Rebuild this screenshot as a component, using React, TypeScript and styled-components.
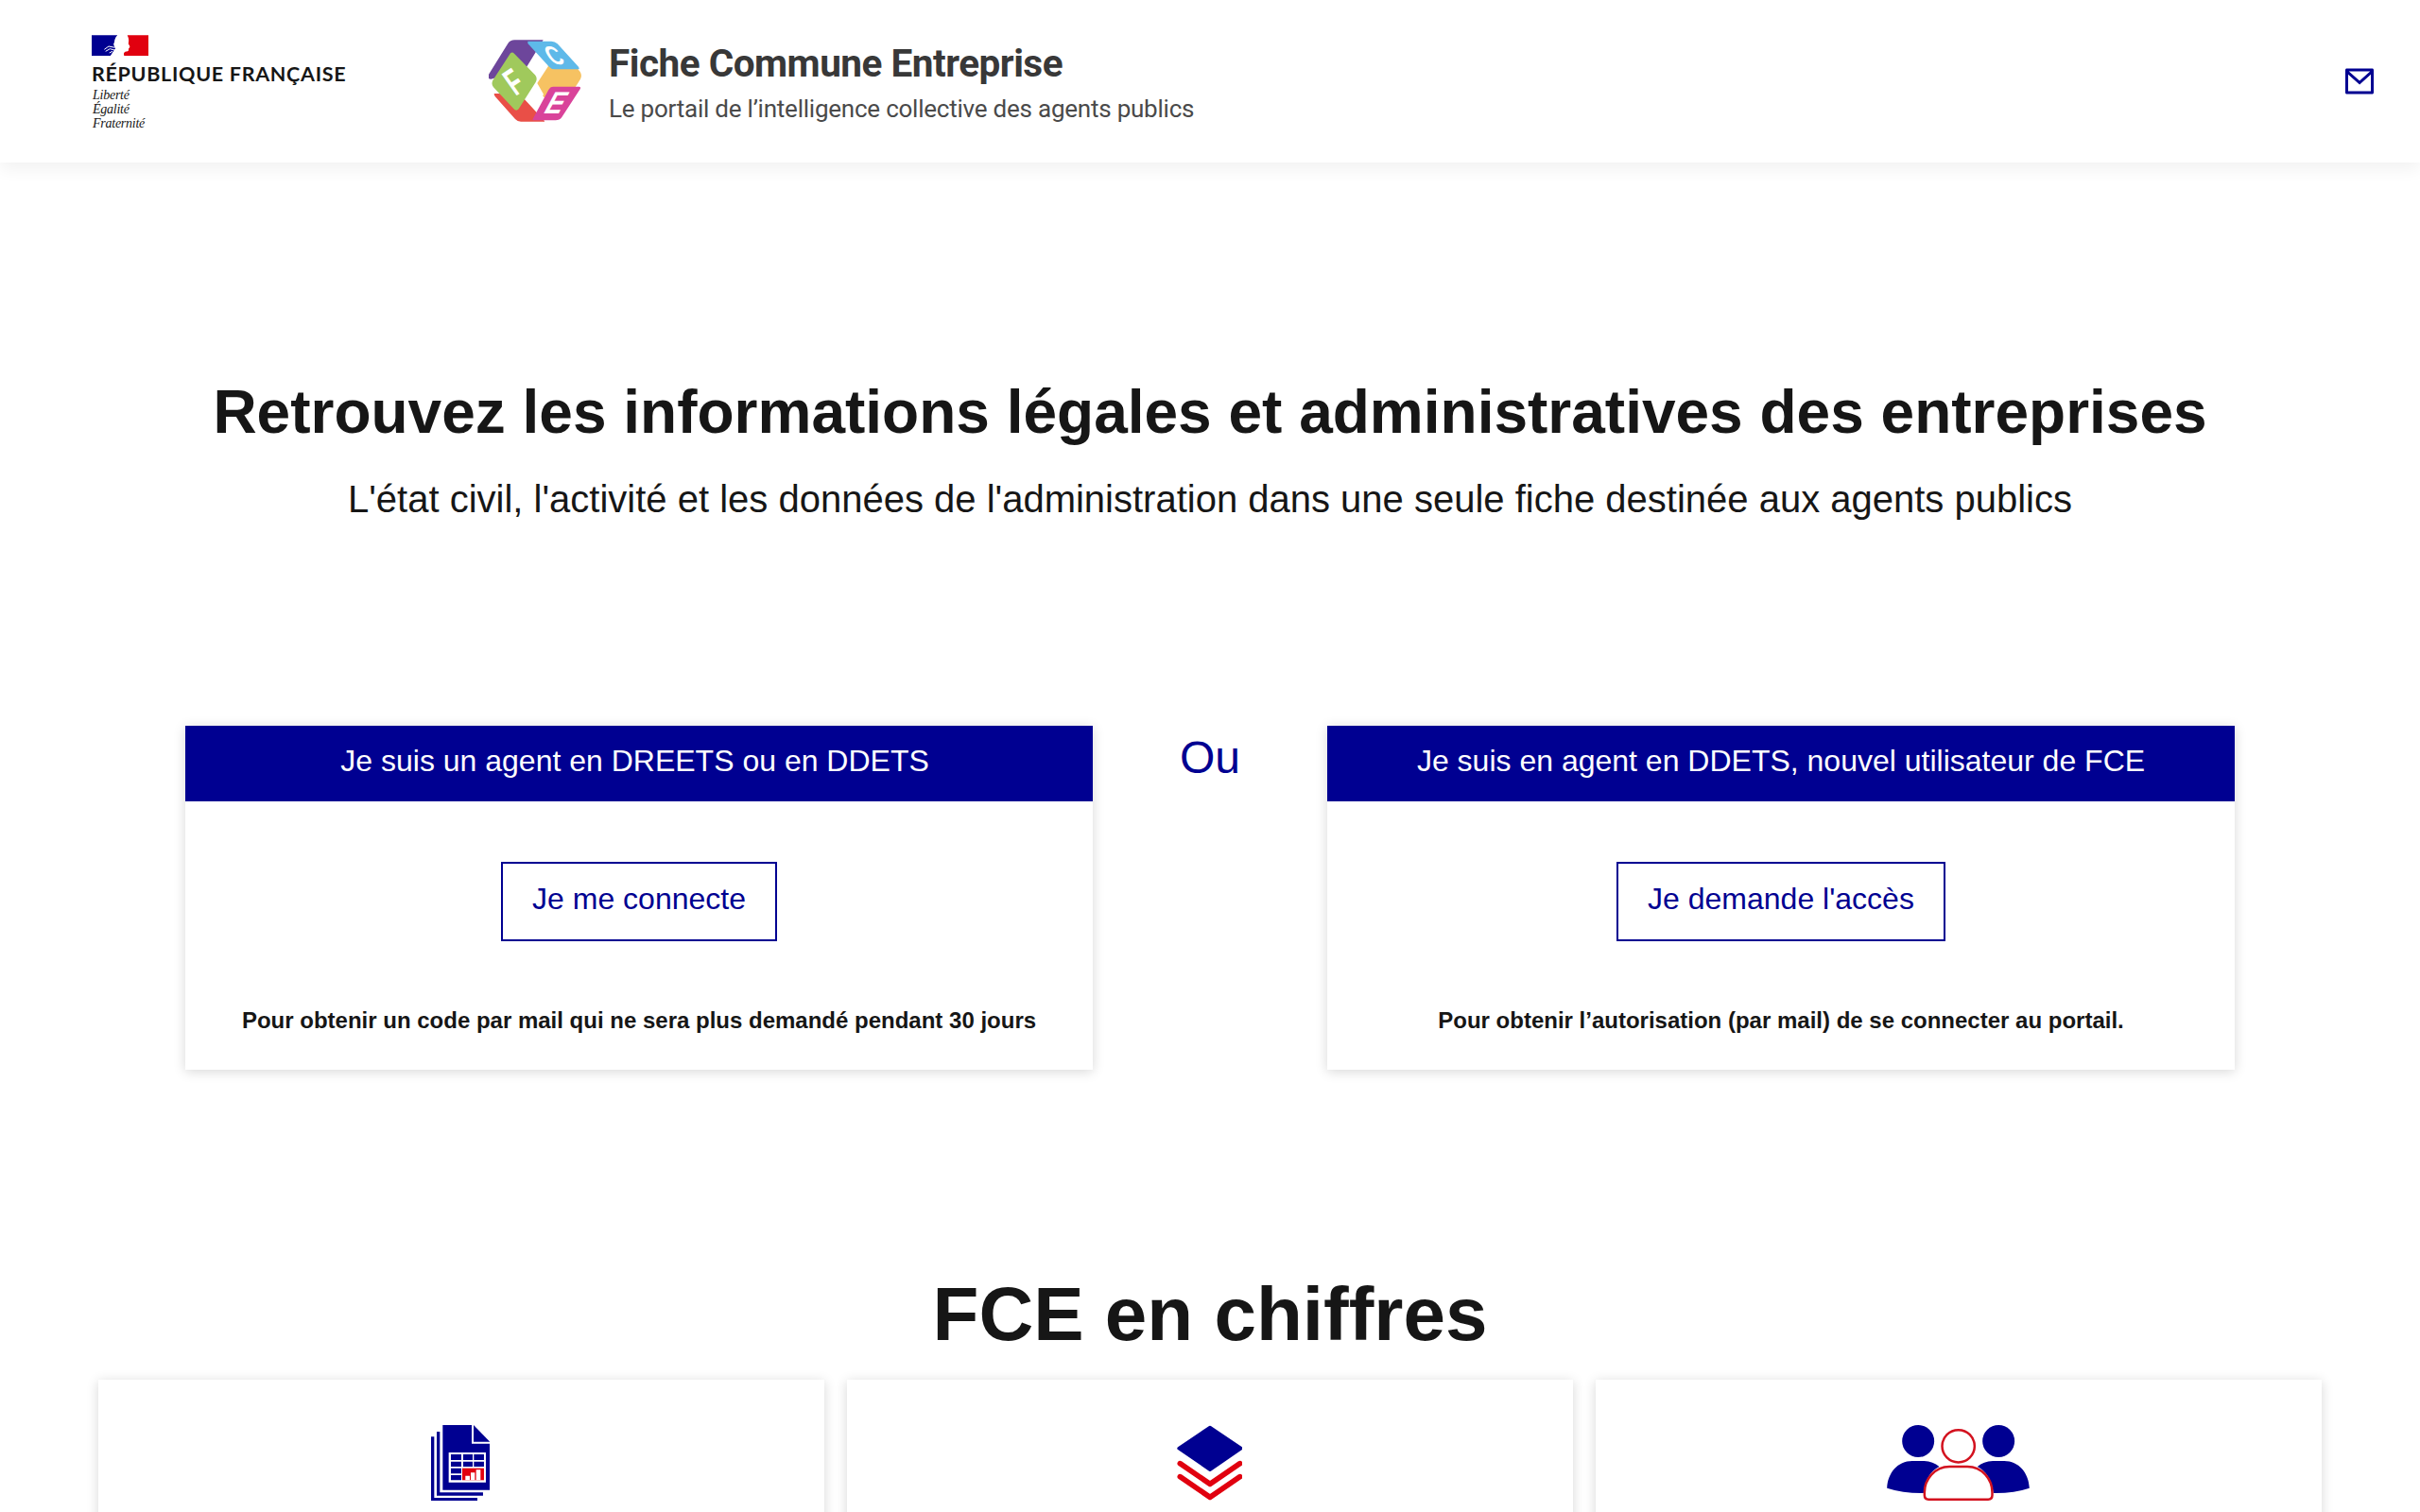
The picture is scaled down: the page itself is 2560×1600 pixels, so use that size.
import React from "react";
import styled, { createGlobalStyle } from "styled-components";
import { RiMailLine } from "react-icons/ri";

const BLUE = "#000091";
const RED = "#e1000f";

const GlobalStyle = createGlobalStyle`
  *, *::before, *::after { box-sizing: border-box; }
  html, body { margin: 0; padding: 0; height: 1600px; overflow: hidden; }
  body {
    background: #fff;
    color: #161616;
    font-family: "Liberation Sans", Arial, sans-serif;
  }
  h1, h2, p { margin: 0; }
`;

const Page = styled.div`
  display: flex;
  flex-direction: column;
  height: 1600px;
  overflow: hidden;
`;

const Header = styled.header`
  display: flex;
  flex: none;
  height: 172px;
  padding: 0 46px 0 97px;
  box-shadow: 0 8px 16px rgba(0, 0, 0, 0.05);
`;

const StateLogo = styled.div`
  width: 420px;
  padding-top: 35px;
  svg { display: block; }
`;

const StateName = styled.div`
  margin-top: 5px;
  font: 700 21.5px/28px Lato, sans-serif;
  letter-spacing: 0.7px;
  white-space: nowrap;
`;

const Motto = styled.div`
  margin: 1px 0 0 1px;
  font: italic 14px/15px "Liberation Serif", serif;
  letter-spacing: -0.25px;
`;

const BrandLogo = styled.svg`
  flex: none;
  margin: 42px 29px 0 0;
`;

const Brand = styled.div`
  flex: 1;
  padding-top: 43px;
  font-family: Roboto, sans-serif;
`;

const BrandTitle = styled.p`
  font-size: 40.5px;
  line-height: 48px;
  font-weight: 700;
  letter-spacing: -0.5px;
  color: #383838;
`;

const BrandTagline = styled.p`
  margin-top: 7px;
  font-size: 26px;
  line-height: 34px;
  letter-spacing: -0.23px;
  color: #4a4a4a;
`;

const MailLink = styled.a`
  align-self: center;
  display: flex;
  color: ${BLUE};
`;

const Hero = styled.section`
  padding-top: 220px;
  text-align: center;
`;

const HeroTitle = styled.h1`
  font-size: 64px;
  line-height: 88px;
`;

const HeroText = styled.p`
  margin-top: 20px;
  font-size: 40px;
  line-height: 56px;
`;

const AccessRow = styled.section`
  display: grid;
  grid-template-columns: 960px 248px 960px;
  margin: 212px 196px 0;
`;

const Card = styled.article`
  background: #fff;
  box-shadow: 0 2px 12px rgba(0, 0, 0, 0.16);
`;

const AccessCard = styled(Card)`
  display: flex;
  flex-direction: column;
  align-items: center;
  height: 364px;
`;

const AccessHeader = styled.div`
  align-self: stretch;
  height: 80px;
  background: ${BLUE};
  color: #fff;
  font-size: 32px;
  line-height: 74px;
  text-align: center;
`;

const AccessButton = styled.button`
  height: 84px;
  margin-top: 64px;
  padding: 0 31px 6px;
  border: 2px solid ${BLUE};
  background: transparent;
  color: ${BLUE};
  font: 32px "Liberation Sans", Arial, sans-serif;
`;

const AccessNote = styled.p`
  margin-top: 68px;
  font-size: 24px;
  line-height: 32px;
  font-weight: 700;
`;

const Or = styled.div`
  color: ${BLUE};
  font-size: 48px;
  line-height: 68px;
  text-align: center;
`;

const StatsTitle = styled.h2`
  margin-top: 205px;
  font-size: 80px;
  line-height: 108px;
  text-align: center;
`;

const StatsRow = styled.section`
  display: grid;
  grid-template-columns: repeat(3, 768px);
  gap: 24px;
  margin: 15px 104px 0;
`;

const StatCard = styled(Card)`
  display: flex;
  justify-content: center;
  align-items: flex-start;
  height: 320px;
  padding: 48px 2px 0 0;
`;

const Letter = styled.text`
  fill: #fff;
  font-family: "Liberation Sans", Arial, sans-serif;
  font-weight: 700;
`;

function FceLogo() {
  return (
    <BrandLogo width="98" height="87" viewBox="51 67 294 261">
      <path d="M51 188V177L112 79Q119 68 133 68H224L166 162L66 190Q56 194 51 190Z" fill="#6d469b" />
      <path d="M68 238H80L150 240L228 325V327H153Q142 327 135 319L71 247Q68 243 68 238Z" fill="#e94f47" />
      <path d="M203 192L228 156Q233 149 240 149H325L341 169Q348 180 342 192L323 222L226 250L205 216Q199 205 203 192Z" fill="#f6c262" />
      <path d="M202 108L240 151L205 205L225 240L200 286L165 245L190 205L172 165Z" fill="#fff" />
      <path d="M120 110Q126 105 132 111L198 179Q207 190 200 202L146 287Q138 296 130 286L66 218Q58 208 64 196Z" fill="#a0c95c" />
      <path d="M175 72H250Q261 72 269 80L336 153Q341 161 333 161H260Q250 161 243 153L175 79Z" fill="#5eb9e9" />
      <path d="M256 216H337Q345 216 341 224L283 313Q276 323 263 323H193Q188 323 192 317L241 226Q246 216 256 216Z" fill="#d9439a" />
      <Letter fontSize="116" textAnchor="middle" transform="matrix(.52 -.34 .6 .85 154 235)">F</Letter>
      <Letter fontSize="82" textAnchor="middle" transform="matrix(.78 0 .6 1 275 145)">C</Letter>
      <Letter fontSize="88" textAnchor="middle" transform="matrix(.95 0 -.6 1.12 248 302)">E</Letter>
    </BrandLogo>
  );
}

function Flag() {
  return (
    <svg width="60" height="24" viewBox="0 0 180 72">
      <path d="M0 7H82Q72 18 72 30Q68 38 76 48L60 72H0Z" fill={BLUE} />
      <path d="M113 7H180V72H103Q99 62 108 58Q118 60 117 50L121 43L116 34Q120 20 113 7Z" fill={RED} />
      <path d="M82 7Q96 -2 112 8Q119 20 115 33L121 43L116 50Q117 59 108 58Q98 62 102 72H60L76 48Q66 38 73 28Q72 16 82 7Z" fill="#fff" />
      <path d="M40 52L54 42L74 46M44 58L58 50L72 54M56 63L66 58" fill="none" stroke="#fff" strokeWidth="3" />
    </svg>
  );
}

function DocumentsIcon() {
  return (
    <svg width="62.3" height="80" viewBox="78 84 187 240">
      <g fill={BLUE}>
        <path d="M78 121H88V315H225V324H78Z" />
        <path d="M96 105H106V298H243V308H96Z" />
        <path d="M115 84H207V143H265V290H115Z" />
        <path d="M213 84L265 137H213Z" />
      </g>
      <path d="M134 171H252V266H134Z" fill="#fff" />
      <path
        d="M141 177H174V195H141ZM180 177H210V195H180ZM214 177H246V195H214ZM141 200H174V216H141ZM180 200H210V216H180ZM214 200H246V216H214ZM141 221H174V238H141ZM141 243H174V259H141Z"
        fill={BLUE}
      />
      <path d="M177 221H246V259H177Z" fill={RED} />
      <path d="M187 245H201V259H187ZM204 235H217V259H204ZM221 226H235V259H221Z" fill="#fff" />
    </svg>
  );
}

function LayersIcon() {
  return (
    <svg width="70" height="80" viewBox="73 84 210 240">
      <path d="M181 91L280 158L181 226L82 158Z" fill={BLUE} stroke={BLUE} strokeWidth="10" strokeLinejoin="round" />
      <g fill="none" stroke={RED} strokeWidth="17" strokeLinecap="round" strokeLinejoin="round">
        <path d="M86 206L181 271L276 206" />
        <path d="M86 248L181 313L276 248" />
      </g>
    </svg>
  );
}

function PeopleIcon() {
  return (
    <svg width="151" height="80" viewBox="47.5 54 453 240">
      <g fill={BLUE}>
        <circle cx="147" cy="105" r="51" />
        <circle cx="402" cy="105" r="51" />
        <path d="M48 254C50 206 82 168 128 168H166Q194 169 214 186Q172 206 164 270Q100 271 48 254Z" />
        <path d="M500 254C498 206 466 168 420 168H384Q354 169 335 186Q376 206 386 270Q450 271 500 254Z" />
      </g>
      <g fill="#fff" stroke="#d3121f" strokeWidth="7.500">
        <circle cx="274.500" cy="121" r="51.500" />
        <path d="M246 186H303C350 186 382 226 382 268V277Q382 290 369 290H180Q167 290 167 277V268C167 226 200 186 246 186Z" />
      </g>
    </svg>
  );
}

const accesses = [
  {
    title: "Je suis un agent en DREETS ou en DDETS\u00a0",
    action: "Je me connecte",
    note: "Pour obtenir un code par mail qui ne sera plus demandé pendant 30 jours",
  },
  {
    title: "Je suis en agent en DDETS, nouvel utilisateur de FCE",
    action: "Je demande l'accès",
    note: "Pour obtenir l’autorisation (par mail) de se connecter au portail.",
  },
];

function Access({ title, action, note }: { title: string; action: string; note: string }) {
  return (
    <AccessCard>
      <AccessHeader>{title}</AccessHeader>
      <AccessButton>{action}</AccessButton>
      <AccessNote>{note}</AccessNote>
    </AccessCard>
  );
}

export default function App() {
  return (
    <Page>
      <GlobalStyle />
      <Header>
        <StateLogo>
          <Flag />
          <StateName>RÉPUBLIQUE FRANÇAISE</StateName>
          <Motto>
            Liberté
            <br />
            Égalité
            <br />
            Fraternité
          </Motto>
        </StateLogo>
        <FceLogo />
        <Brand>
          <BrandTitle>Fiche Commune Entreprise</BrandTitle>
          <BrandTagline>Le portail de l’intelligence collective des agents publics</BrandTagline>
        </Brand>
        <MailLink>
          <RiMailLine size={36} />
        </MailLink>
      </Header>
      <Hero>
        <HeroTitle>Retrouvez les informations légales et administratives des entreprises</HeroTitle>
        <HeroText>
          L'état civil, l'activité et les données de l'administration dans une seule fiche destinée aux agents publics
        </HeroText>
      </Hero>
      <AccessRow>
        <Access {...accesses[0]} />
        <Or>Ou</Or>
        <Access {...accesses[1]} />
      </AccessRow>
      <StatsTitle>FCE en chiffres</StatsTitle>
      <StatsRow>
        <StatCard>
          <DocumentsIcon />
        </StatCard>
        <StatCard>
          <LayersIcon />
        </StatCard>
        <StatCard>
          <PeopleIcon />
        </StatCard>
      </StatsRow>
    </Page>
  );
}
